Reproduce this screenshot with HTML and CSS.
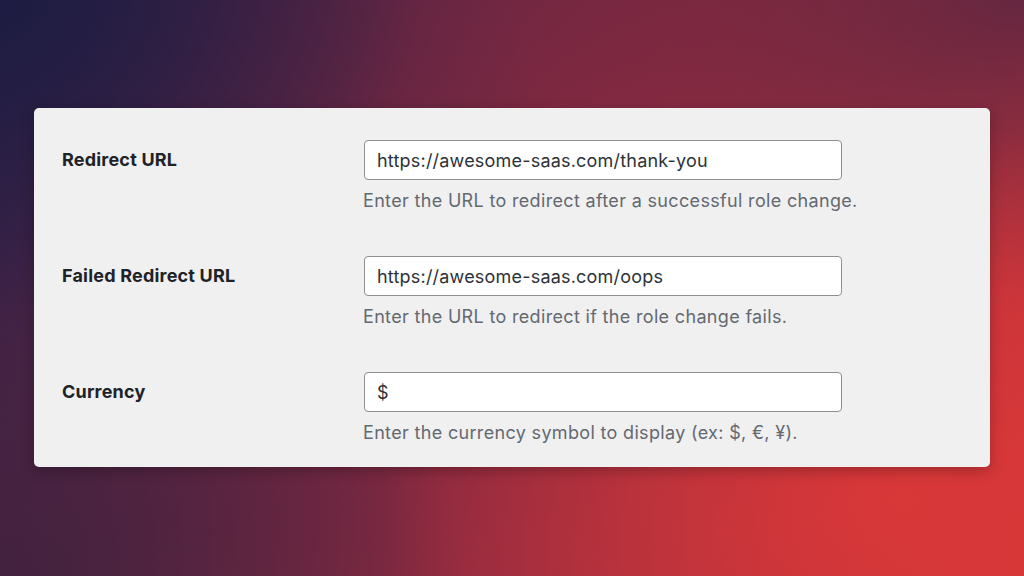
FILE: index.html
```html
<!DOCTYPE html>
<html lang="en">
<head>
  <meta charset="UTF-8" />
  <title>Redirect Settings</title>
  <link rel="stylesheet" href="styles.css">
</head>
<body>

<div class="settings-card">
  <div class="field-row">
    <label class="field-label" for="redirectUrl">Redirect URL</label>
    <div class="field-body">
      <input class="field-input" id="redirectUrl" type="text" value="https://awesome-saas.com/thank-you">
      <p class="field-desc">Enter the URL to redirect after a successful role change.</p>
    </div>
  </div>

  <div class="field-row">
    <label class="field-label" for="failedUrl">Failed Redirect URL</label>
    <div class="field-body">
      <input class="field-input" id="failedUrl" type="text" value="https://awesome-saas.com/oops">
      <p class="field-desc">Enter the URL to redirect if the role change fails.</p>
    </div>
  </div>

  <div class="field-row">
    <label class="field-label" for="currency">Currency</label>
    <div class="field-body">
      <input class="field-input" id="currency" type="text" value="$">
      <p class="field-desc">Enter the currency symbol to display (ex: $, €, ¥).</p>
    </div>
  </div>
</div>

</body>
</html>
```
FILE: styles.css
```css
html, body {
  height: 100%;
}

body {
  margin: 0;
  padding: 108px 34px 0;
  box-sizing: border-box;
  font-family: Inter, "Noto Sans", sans-serif;
  background:
    radial-gradient(ellipse 520px 380px at 900px 500px, rgba(220, 56, 56, 0.9), rgba(220, 56, 56, 0) 100%),
    radial-gradient(ellipse 500px 300px at 1024px 0px, rgba(70, 35, 65, 0.7), rgba(70, 35, 65, 0) 100%),
    radial-gradient(ellipse 420px 320px at 0px 0px, rgba(30, 28, 66, 1), rgba(30, 28, 66, 0) 100%),
    radial-gradient(ellipse 460px 300px at 0px 576px, rgba(65, 34, 62, 0.9), rgba(65, 34, 62, 0) 100%),
    linear-gradient(115deg, #2c2048 0%, #6a2642 35%, #8d2a40 55%, #b2313e 80%, #d33638 100%);
}

.settings-card {
  width: 956px;
  box-sizing: border-box;
  background: #f0f0f1;
  border-radius: 5px;
  padding: 32px 28px 22px;
  box-shadow: 0 4px 14px rgba(0, 0, 0, 0.25);
}

.field-row {
  display: flex;
  margin-bottom: 43px;
}

.field-row:last-child {
  margin-bottom: 0;
}

.field-label {
  width: 302px;
  flex-shrink: 0;
  line-height: 40px;
  font-size: 18px;
  font-weight: 700;
  letter-spacing: 0.2px;
  color: #1d2327;
}

.field-body {
  width: 478px;
}

.field-input {
  display: block;
  width: 100%;
  height: 40px;
  box-sizing: border-box;
  margin: 0;
  padding: 0 12px;
  border: 1px solid #8c8f94;
  border-radius: 4px;
  background: #fff;
  font-family: inherit;
  font-size: 18px;
  letter-spacing: 0.2px;
  color: #2c3338;
  outline: none;
}

.field-desc {
  margin: 9px 0 0 -1px;
  font-size: 18px;
  line-height: 24px;
  letter-spacing: 0.33px;
  color: #646970;
  white-space: nowrap;
}
```
